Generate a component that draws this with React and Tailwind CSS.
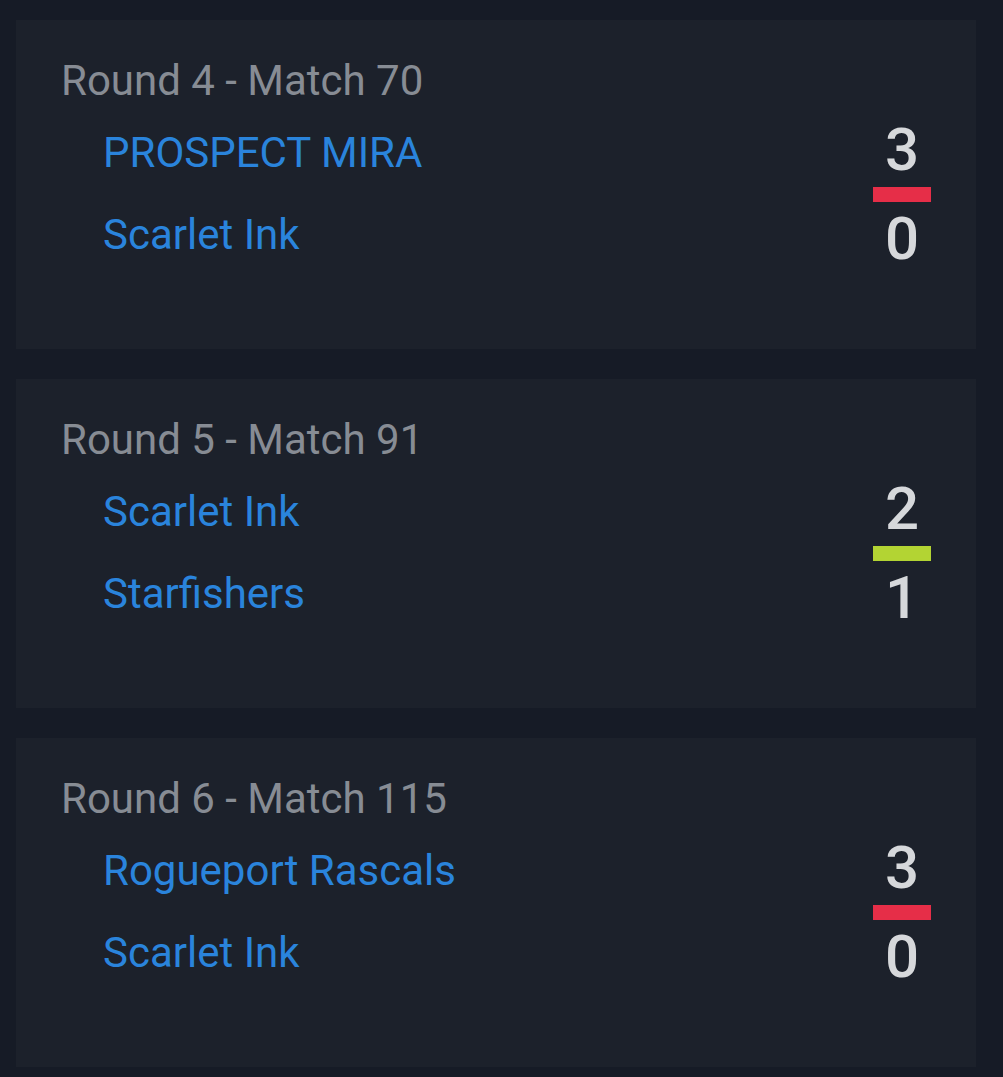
import React from "react";

const matches = [
  {
    title: "Round 4 - Match 70",
    teams: ["PROSPECT MIRA", "Scarlet Ink"],
    scores: [3, 0],
    win: false,
  },
  {
    title: "Round 5 - Match 91",
    teams: ["Scarlet Ink", "Starfishers"],
    scores: [2, 1],
    win: true,
  },
  {
    title: "Round 6 - Match 115",
    teams: ["Rogueport Rascals", "Scarlet Ink"],
    scores: [3, 0],
    win: false,
  },
];

const MatchCard = ({ match }) => {
  return (
    <div className="bg-[#1c212b] h-[329px] shrink-0 pt-[36px] pl-[45px] pr-[45px] flex justify-between">
      <div>
        <h2 className="text-[42px] leading-[49px] text-[#878c94]">{match.title}</h2>
        <div className="mt-[7px] pl-[42px]">
          {match.teams.map((team, i) => (
            <div key={i} className="text-[42px] leading-[82px] text-[#2a84dc]">
              {team}
            </div>
          ))}
        </div>
      </div>
      <div className="w-[58px] pt-[64px] flex flex-col items-center">
        <div className="text-[60px] leading-[60px] font-medium text-[#d6d8db]">{match.scores[0]}</div>
        <div
          className={
            match.win
              ? "mt-[6.5px] w-[58px] h-[15px] bg-[#b3d433]"
              : "mt-[6.5px] w-[58px] h-[15px] bg-[#e62e48]"
          }
        ></div>
        <div className="mt-[7px] text-[60px] leading-[60px] font-medium text-[#d6d8db]">{match.scores[1]}</div>
      </div>
    </div>
  );
};

export default function App() {
  return (
    <div
      className="min-h-[1077px] bg-[#161b26] pl-[16px] pr-[27px] pt-[20px] pb-[10px] flex flex-col gap-[30px]"
      style={{ fontFamily: "Roboto, 'Noto Sans', sans-serif" }}
    >
      {matches.map((m, i) => (
        <MatchCard key={i} match={m} />
      ))}
    </div>
  );
}
